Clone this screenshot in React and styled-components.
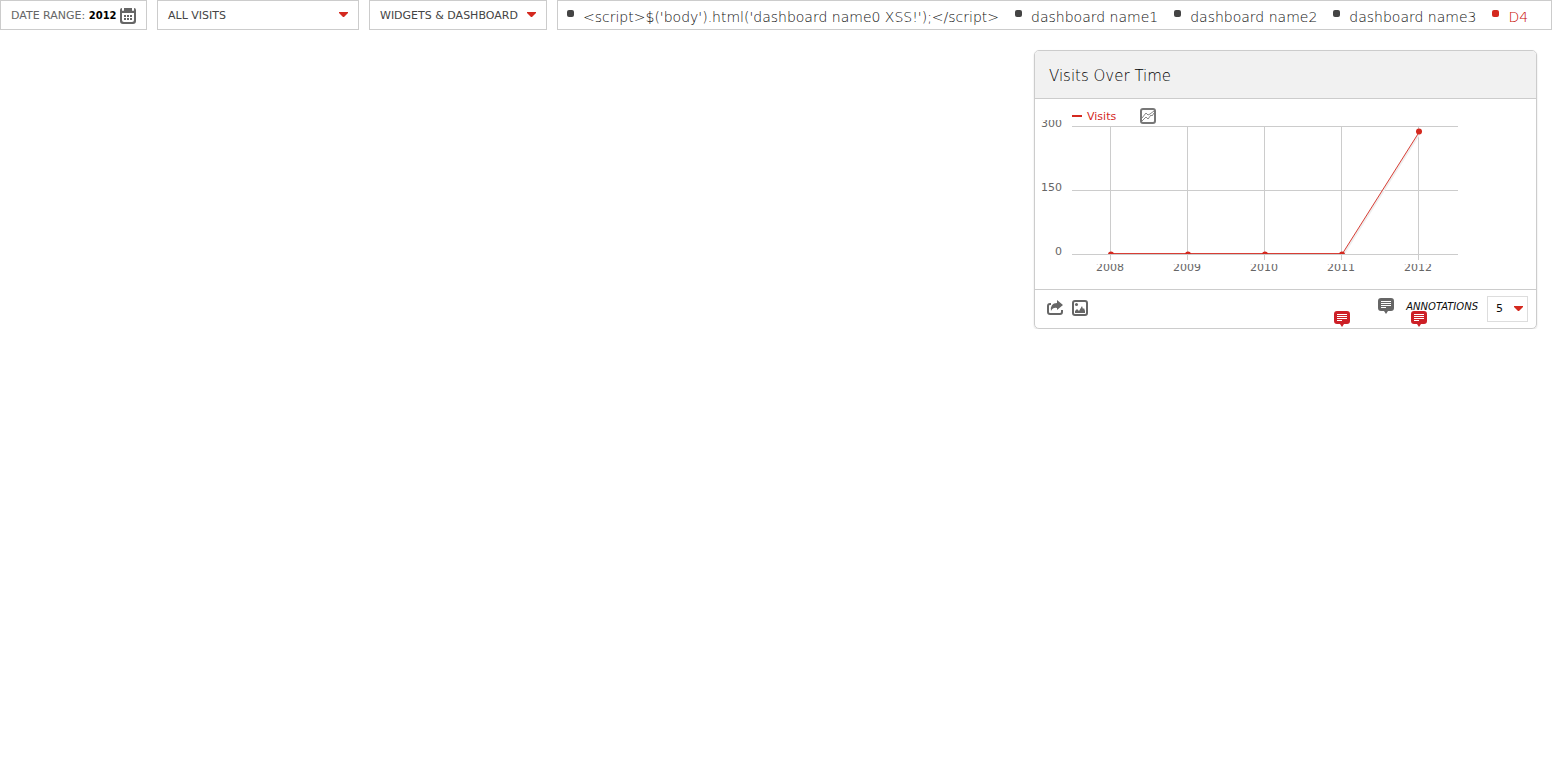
import React from "react";
import styled, { createGlobalStyle } from "styled-components";

const GlobalStyle = createGlobalStyle`
  *, *::before, *::after { box-sizing: border-box; }
  body { margin: 0; background: #fff; color: #444; font-family: "DejaVu Sans", Verdana, sans-serif; font-size: 11px; }
  button, select { font: inherit; color: inherit; }
`;

const TopBar = styled.header`
  display: flex;
  gap: 10px;
`;

const Control = styled.button`
  display: flex;
  align-items: center;
  justify-content: space-between;
  flex: 0 0 ${(p) => p.$width}px;
  height: 30px;
  padding: 2px 10px 0 10px;
  border: 1px solid #ccc;
  background: #fff;
  color: ${(p) => (p.$muted ? "#666" : "#444")};
  line-height: 12px;
  text-transform: uppercase;
  white-space: nowrap;
`;

const Period = styled.strong`
  color: #000;
  font-size: 10px;
`;

const DashboardNav = styled.nav`
  flex: 1;
  min-width: 0;
  height: 30px;
  padding: 0 9px;
  border: 1px solid #ccc;
`;

const DashboardList = styled.ul`
  display: flex;
  gap: 16px;
  margin: 0;
  padding: 0;
  list-style: none;
`;

const DashboardItem = styled.li`
  display: flex;
  gap: 9px;
  color: ${(p) => (p.$active ? "#c80a00" : "#111")};
  &::before {
    content: "";
    flex: none;
    width: 7px;
    height: 7px;
    margin-top: 9px;
    border-radius: 2px;
    background: ${(p) => (p.$active ? "#d4291f" : "#444")};
  }
`;

const DashboardLink = styled.a`
  color: inherit;
  font-size: 14px;
  font-weight: 200;
  line-height: 32px;
  height: 28px;
  white-space: nowrap;
  text-decoration: none;
`;

const Columns = styled.main`
  display: grid;
  grid-template-columns: repeat(3, 1fr);
  margin-top: 20px;
  padding-right: 1px;
`;

const Widget = styled.article`
  grid-column: 3;
  margin-right: 14px;
  border: 1px solid #ccc;
  border-radius: 5px;
  box-shadow: 0 1px 2px #ddd;
  overflow: hidden;
`;

const WidgetTitle = styled.h3`
  margin: 0;
  padding: 3px 14px 0;
  border-bottom: 1px solid #ccc;
  background: #f1f1f1;
  color: #000;
  font-size: 15px;
  font-weight: 200;
  line-height: 44px;
  height: 48px;
`;

const ChartArea = styled.div`
  height: 190px;
  padding-top: 9px;
`;

const Legend = styled.div`
  display: flex;
  align-items: center;
  height: 16px;
  margin-bottom: -4px;
  padding-left: 37px;
  color: #d4291f;
`;

const Swatch = styled.span`
  width: 10px;
  height: 2px;
  margin-right: 5px;
  background: currentColor;
`;

const IconButton = styled.button`
  display: block;
  width: 16px;
  height: 16px;
  padding: 0;
  border: 0;
  background: none;
  svg { display: block; }
`;

const PickerButton = styled(IconButton)`
  margin-left: 24px;
`;

const Plot = styled.svg`
  display: block;
  fill: #666;
`;

const WidgetFooter = styled.footer`
  position: relative;
  display: flex;
  gap: 9px;
  height: 39px;
  padding: 10px 8px 0 12px;
  border-top: 1px solid #ccc;
`;

const Annotations = styled.button`
  display: flex;
  align-items: center;
  gap: 12px;
  height: 16px;
  margin: -2px 0 0 auto;
  padding: 0;
  border: 0;
  background: none;
  color: #0d0d0d;
  font-style: italic;
  font-size: 10px;
  text-transform: uppercase;
`;

const LimitBox = styled.div`
  position: relative;
  width: 41px;
  height: 26px;
  margin-top: -4px;
  svg { position: absolute; right: 5px; top: 10px; pointer-events: none; }
`;

const LimitSelect = styled.select`
  appearance: none;
  width: 100%;
  height: 100%;
  padding: 0 8px 1px;
  border: 1px solid #ddd;
  background: #fff;
  color: #0d0d0d;
`;

const Marker = styled(IconButton)`
  position: absolute;
  top: 21px;
  left: ${(p) => p.$x}px;
`;

const CaretIcon = styled.svg`
  margin-bottom: 4px;
`;

const Caret = () => (
  <CaretIcon width="9" height="5" viewBox="0 0 9 5" aria-hidden="true">
    <path d="M0 0H9V1L5 5H4L0 1Z" fill="#d4291f" />
  </CaretIcon>
);

const CalendarIcon = () => (
  <svg width="16" height="16" viewBox="0 0 16 16" aria-hidden="true">
    <path
      fill="#666"
      fillRule="evenodd"
      d="M2 0V2Q2 3 3 3Q4 3 4 2V0H12V2Q12 3 13 3Q14 3 14 2V0Q16 0 16 2V13Q16 16 13 16H3Q0 16 0 13V2Q0 0 2 0ZM2 5V12Q2 14 4 14H12Q14 14 14 12V5Z"
    />
    <path fill="#666" d="M7 7h2v2H7zM10 7h2v2h-2zM4 10h2v2H4zM7 10h2v2H7zM10 10h2v2h-2zM4 7h2v2H4z" />
  </svg>
);

const PickerIcon = () => (
  <svg width="16" height="16" viewBox="0 0 16 16" fill="none" aria-hidden="true">
    <rect x="1" y="1" width="14" height="14" rx="2" stroke="#777" strokeWidth="2" />
    <path d="M2 10L6 5L8 7L10 6L14 3M2 13L6 9L8 11L11 7L12 8L14 5" stroke="#888" />
  </svg>
);

const ExportIcon = () => (
  <svg width="16" height="16" viewBox="0 0 16 16" aria-hidden="true">
    <path d="M4 4H3Q1 4 1 6V12Q1 14 3 14H13Q15 14 15 12V10" fill="none" stroke="#666" strokeWidth="2" />
    <path d="M10 0L16 5L10 10V8Q6 7 4 11Q3 3 10 3Z" fill="#666" />
  </svg>
);

const ImageIcon = () => (
  <svg width="16" height="16" viewBox="0 0 16 16" aria-hidden="true">
    <rect x="1" y="1" width="14" height="14" rx="2" fill="none" stroke="#666" strokeWidth="2" />
    <circle cx="4.5" cy="4.5" r="1.5" fill="#666" />
    <path d="M3 13V11L5 9L7 11L10 6L11 9L12 8L13 11V13Z" fill="#666" />
  </svg>
);

const NoteIcon = ({ color }) => (
  <svg width="16" height="16" viewBox="0 0 16 16" aria-hidden="true">
    <path d="M3 0H13Q16 0 16 3V10Q16 13 13 13H10L8 16L6 13H3Q0 13 0 10V3Q0 0 3 0Z" fill={color} />
    <path d="M3 3.5H13M3 5.5H13M3 7.5H13M3 9.5H8" stroke="#fff" />
  </svg>
);

const points = [
  { year: 2008, x: 75, y: 134 },
  { year: 2009, x: 152, y: 134 },
  { year: 2010, x: 229, y: 134 },
  { year: 2011, x: 306, y: 134 },
  { year: 2012, x: 383, y: 11 },
];
const levels = [
  { value: 300, y: 6 },
  { value: 150, y: 70 },
  { value: 0, y: 134 },
];

const VisitsPlot = () => (
  <Plot width="430" height="158" viewBox="0 0 430 158" role="img" aria-label="Visits by year">
    <clipPath id="plot-area"><rect x="37" y="0" width="387" height="134" /></clipPath>
    <clipPath id="year-labels"><rect x="37" y="144" width="387" height="14" /></clipPath>
    <g fill="#ccc">
      {levels.map((l) => <rect key={l.value} x="37" y={l.y} width="386" height="1" />)}
      {points.map((p) => <rect key={p.year} x={p.x} y="6" width="1" height="134" />)}
    </g>
    {levels.map((l) => <text key={l.value} x="27" y={l.y + 1} textAnchor="end">{l.value}</text>)}
    <g clipPath="url(#year-labels)">
      {points.map((p) => <text key={p.year} x={p.x} y="151" textAnchor="middle">{p.year}</text>)}
    </g>
    <g clipPath="url(#plot-area)">
      <path d="M76 135H308L385 13" stroke="#eee" strokeWidth="2" fill="none" />
      <path d="M75.5 133.5H307.5L384.5 11.5" stroke="#d4291f" strokeOpacity="0.9" fill="none" />
      {points.map((p) => <circle key={p.year} cx={p.x + 1} cy={p.y + 0.5} r="3" fill="#d4291f" />)}
    </g>
  </Plot>
);

const dashboards = [
  "<script>$('body').html('dashboard name0 XSS!');</script>",
  "dashboard name1",
  "dashboard name2",
  "dashboard name3",
  "D4",
];

export default function App() {
  return (
    <>
      <GlobalStyle />
      <TopBar>
        <Control type="button" $width={147} $muted>
          <span>Date range: <Period>2012</Period></span>
          <CalendarIcon />
        </Control>
        <Control type="button" $width={202}>All visits<Caret /></Control>
        <Control type="button" $width={178}>Widgets &amp; Dashboard<Caret /></Control>
        <DashboardNav aria-label="Dashboards">
          <DashboardList>
            {dashboards.map((name) => (
              <DashboardItem key={name} $active={name === "D4"}>
                <DashboardLink href="#">{name}</DashboardLink>
              </DashboardItem>
            ))}
          </DashboardList>
        </DashboardNav>
      </TopBar>
      <Columns>
        <Widget>
          <WidgetTitle>Visits Over Time</WidgetTitle>
          <ChartArea>
            <Legend>
              <Swatch />
              <span>Visits</span>
              <PickerButton type="button" aria-label="Select metrics"><PickerIcon /></PickerButton>
            </Legend>
            <VisitsPlot />
          </ChartArea>
          <WidgetFooter>
            <IconButton type="button" aria-label="Export"><ExportIcon /></IconButton>
            <IconButton type="button" aria-label="Export as image"><ImageIcon /></IconButton>
            <Annotations type="button"><NoteIcon color="#666" />Annotations</Annotations>
            <LimitBox>
              <LimitSelect aria-label="Number of periods" defaultValue="5">
                <option>5</option>
                <option>10</option>
              </LimitSelect>
              <Caret />
            </LimitBox>
            <Marker type="button" aria-label="Notes for 2011" $x={299}><NoteIcon color="#cd2027" /></Marker>
            <Marker type="button" aria-label="Notes for 2012" $x={376}><NoteIcon color="#cd2027" /></Marker>
          </WidgetFooter>
        </Widget>
      </Columns>
    </>
  );
}
